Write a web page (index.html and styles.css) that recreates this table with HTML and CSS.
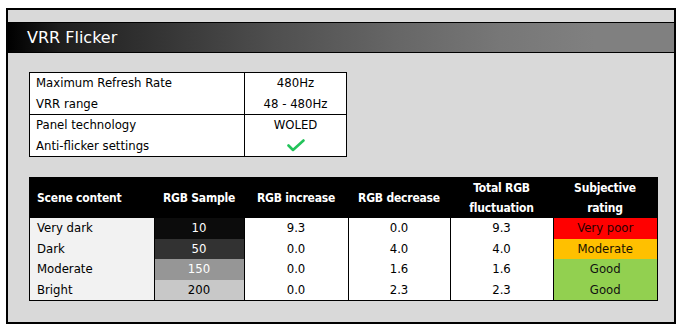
FILE: index.html
```html
<!DOCTYPE html>
<html>
<head>
<meta charset="utf-8">
<link rel="stylesheet" href="styles.css">
</head>
<body>
<div class="panel">
  <div class="bar"><h1 class="title">VRR Flicker</h1></div>
  <table class="spec">
    <tbody class="grp">
      <tr><td class="lbl">Maximum Refresh Rate</td><td class="val">480Hz</td></tr>
      <tr><td class="lbl">VRR range</td><td class="val">48 - 480Hz</td></tr>
    </tbody>
    <tbody class="grp">
      <tr><td class="lbl">Panel technology</td><td class="val">WOLED</td></tr>
      <tr><td class="lbl">Anti-flicker settings</td><td class="val"><svg class="tick" width="18" height="13" viewBox="0 0 18 13"><polyline points="1.5,6.5 6,11 16.5,1.5" fill="none" stroke="#23c35a" stroke-width="2.6" stroke-linecap="round" stroke-linejoin="round"/></svg></td></tr>
    </tbody>
  </table>
  <table class="data">
    <thead>
      <tr>
        <th class="c1 left">Scene content</th>
        <th class="c2">RGB Sample</th>
        <th class="c3">RGB increase</th>
        <th class="c4">RGB decrease</th>
        <th class="c5">Total RGB<br>fluctuation</th>
        <th class="c6">Subjective<br>rating</th>
      </tr>
    </thead>
    <tbody>
      <tr><td class="scene">Very dark</td><td class="s10">10</td><td>9.3</td><td>0.0</td><td>9.3</td><td class="vpoor">Very poor</td></tr>
      <tr><td class="scene">Dark</td><td class="s50">50</td><td>0.0</td><td>4.0</td><td>4.0</td><td class="mod">Moderate</td></tr>
      <tr><td class="scene">Moderate</td><td class="s150">150</td><td>0.0</td><td>1.6</td><td>1.6</td><td class="good">Good</td></tr>
      <tr><td class="scene">Bright</td><td class="s200">200</td><td>0.0</td><td>2.3</td><td>2.3</td><td class="good">Good</td></tr>
    </tbody>
  </table>
</div>
</body>
</html>
```

FILE: styles.css
```css
html, body { background: #fff; }
body {
  margin: 8px 0 0 6px;
  font-family: "DejaVu Sans Condensed", "DejaVu Sans", sans-serif;
  font-stretch: condensed;
  color: #000;
}
.panel {
  width: 666px;
  height: 312px;
  border: 2px solid #000;
  background: #d9d9d9;
  box-sizing: content-box;
}
.bar {
  margin-top: 12px;
  height: 29px;
  border-top: 1px solid #000;
  border-bottom: 1px solid #000;
  background: linear-gradient(to right, #000 0%, #1e1e1e 8%, #333 22%, #4f4f4f 40%, #666 58%, #777 74%, #808080 88%, #808080 100%);
  display: flex;
  align-items: center;
}
.title {
  margin: 0 0 0 19px;
  font-family: "DejaVu Sans", sans-serif;
  font-stretch: normal;
  font-size: 16px;
  font-weight: normal;
  color: #fff;
  line-height: 20px;
}
table {
  border-collapse: collapse;
  margin-left: 21px;
  font-size: 13px;
}
.spec {
  margin-top: 19px;
  width: 318px;
  background: #fff;
  border: 1px solid #000;
}
.spec .grp { border: 1px solid #000; }
.spec td {
  height: 20.5px;
  padding: 0;
  line-height: 20px;
}
.spec .lbl {
  width: 208px;
  padding-left: 6px;
  border-right: 1px solid #000;
}
.spec .val { text-align: center; }
.tick { display: inline-block; vertical-align: middle; margin-top: -2px; }
.data {
  margin-top: 20px;
  width: 627px;
  border: 1px solid #000;
  table-layout: fixed;
}
.data th {
  background: #000;
  color: #fff;
  font-weight: bold;
  font-size: 12px;
  letter-spacing: -0.2px;
  height: 40px;
  padding: 0;
  line-height: 20px;
  text-align: center;
}
.data th.left { text-align: left; padding-left: 7px; }
.c1 { width: 117px; }
.c2 { width: 90px; }
.c3 { width: 104px; }
.c4 { width: 102px; }
.c5 { width: 103px; }
.c6 { width: 104px; }
.data td {
  height: 20.5px;
  padding: 0;
  line-height: 20px;
  text-align: center;
  background: #fff;
  border-left: 1px solid #000;
}
.data td.scene {
  text-align: left;
  padding-left: 7px;
  background: #f2f2f2;
  border-left: none;
}
.data td.s10 { background: #0c0c0c; color: #fff; }
.data td.s50 { background: #323232; color: #fff; }
.data td.s150 { background: #969696; color: #fff; }
.data td.s200 { background: #c8c8c8; color: #000; }
.data td.vpoor { background: #ff0000; color: #2a0000; }
.data td.mod { background: #ffc000; color: #1a1200; }
.data td.good { background: #92d050; color: #111; }
```
